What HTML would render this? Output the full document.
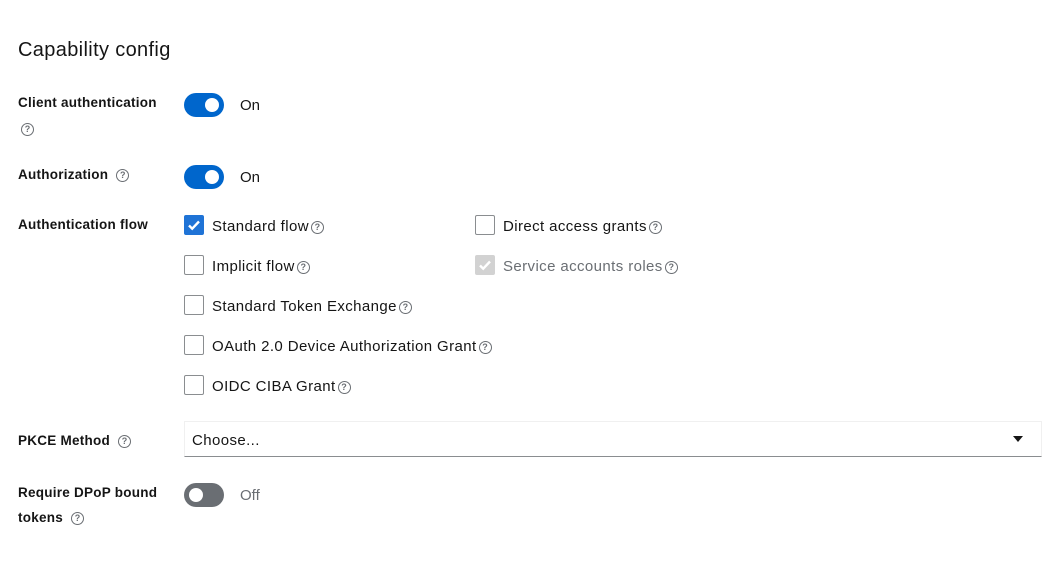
<!DOCTYPE html>
<html><head><style>
body{margin:0;width:1048px;height:569px;background:#fff;font-family:"Liberation Sans",sans-serif;color:#151515;position:relative;overflow:hidden}
.a{position:absolute;white-space:nowrap}
h1{position:absolute;left:18px;top:39px;margin:0;font-size:20px;font-weight:normal;letter-spacing:0.35px}
.l{font-size:13.5px;font-weight:bold;line-height:26px;letter-spacing:0.25px}
.t{position:absolute;width:40px;height:24px;border-radius:12px;background:#0066cc;left:184px}
.t::after{content:"";position:absolute;top:5px;left:21px;width:14px;height:14px;border-radius:50%;background:#fff}
.t.off{background:#6a6e73}.t.off::after{left:5px}
.s{font-size:15px;left:240px}
.cb{position:absolute;width:18px;height:18px;border:1px solid #8a8d90;border-radius:2px;background:#fff}
.cb.on{background:#1f73d6;border-color:#1f73d6}
.cb.dis{background:#d2d2d2;border-color:#d2d2d2}
.cb svg{position:absolute;left:2px;top:2px}
.c{font-size:15px;line-height:20px;letter-spacing:0.4px}
.q{display:inline-block;width:11px;height:11px;border:1.5px solid #6a6e73;border-radius:50%;font-size:9px;line-height:11px;text-align:center;color:#6a6e73;font-weight:bold;vertical-align:middle;margin-left:2px;letter-spacing:0;font-family:"Liberation Sans",sans-serif}
</style></head><body>
<h1>Capability config</h1>
<div class="a l" style="left:18px;top:90px">Client authentication</div>
<div class="a l" style="left:21px;top:116px"><span class="q" style="margin:0">?</span></div>
<div class="t" style="top:93px"></div><div class="a s" style="top:97px">On</div>
<div class="a l" style="left:18px;top:162px">Authorization <span class="q" style="margin-left:4px">?</span></div>
<div class="t" style="top:165px"></div><div class="a s" style="top:169px">On</div>
<div class="a l" style="left:18px;top:212px">Authentication flow</div>

<div class="cb on" style="left:184px;top:215px"><svg width="14" height="14" viewBox="0 0 14 14"><path d="M2 7.5l3.2 3.2L12 3.5" stroke="#fff" stroke-width="2.4" fill="none"/></svg></div>
<div class="a c" style="left:212px;top:217px">Standard flow<span class="q">?</span></div>
<div class="cb" style="left:475px;top:215px"></div>
<div class="a c" style="left:503px;top:217px">Direct access grants<span class="q">?</span></div>
<div class="cb" style="left:184px;top:255px"></div>
<div class="a c" style="left:212px;top:257px">Implicit flow<span class="q">?</span></div>
<div class="cb dis" style="left:475px;top:255px"><svg width="14" height="14" viewBox="0 0 14 14"><path d="M2 7.5l3.2 3.2L12 3.5" stroke="#fff" stroke-width="2.4" fill="none"/></svg></div>
<div class="a c" style="left:503px;top:257px;color:#6a6e73">Service accounts roles<span class="q">?</span></div>
<div class="cb" style="left:184px;top:295px"></div>
<div class="a c" style="left:212px;top:297px">Standard Token Exchange<span class="q">?</span></div>
<div class="cb" style="left:184px;top:335px"></div>
<div class="a c" style="left:212px;top:337px">OAuth 2.0 Device Authorization Grant<span class="q">?</span></div>
<div class="cb" style="left:184px;top:375px"></div>
<div class="a c" style="left:212px;top:377px">OIDC CIBA Grant<span class="q">?</span></div>

<div class="a l" style="left:18px;top:428px">PKCE Method <span class="q" style="margin-left:4px">?</span></div>
<div class="a" style="left:184px;top:421px;width:856px;height:34px;border:1px solid #f0f0f0;border-bottom:1px solid #8a8d90"></div>
<div class="a c" style="left:192px;top:431px">Choose...</div>
<svg class="a" style="left:1012px;top:435px" width="12" height="8" viewBox="0 0 12 8"><path d="M1 1h10L6 7z" fill="#151515"/></svg>

<div class="a l" style="left:18px;top:480px">Require DPoP bound</div>
<div class="a l" style="left:18px;top:505px">tokens <span class="q" style="margin-left:4px">?</span></div>
<div class="t off" style="top:483px"></div><div class="a s" style="top:487px;color:#6a6e73">Off</div>
</body></html>
